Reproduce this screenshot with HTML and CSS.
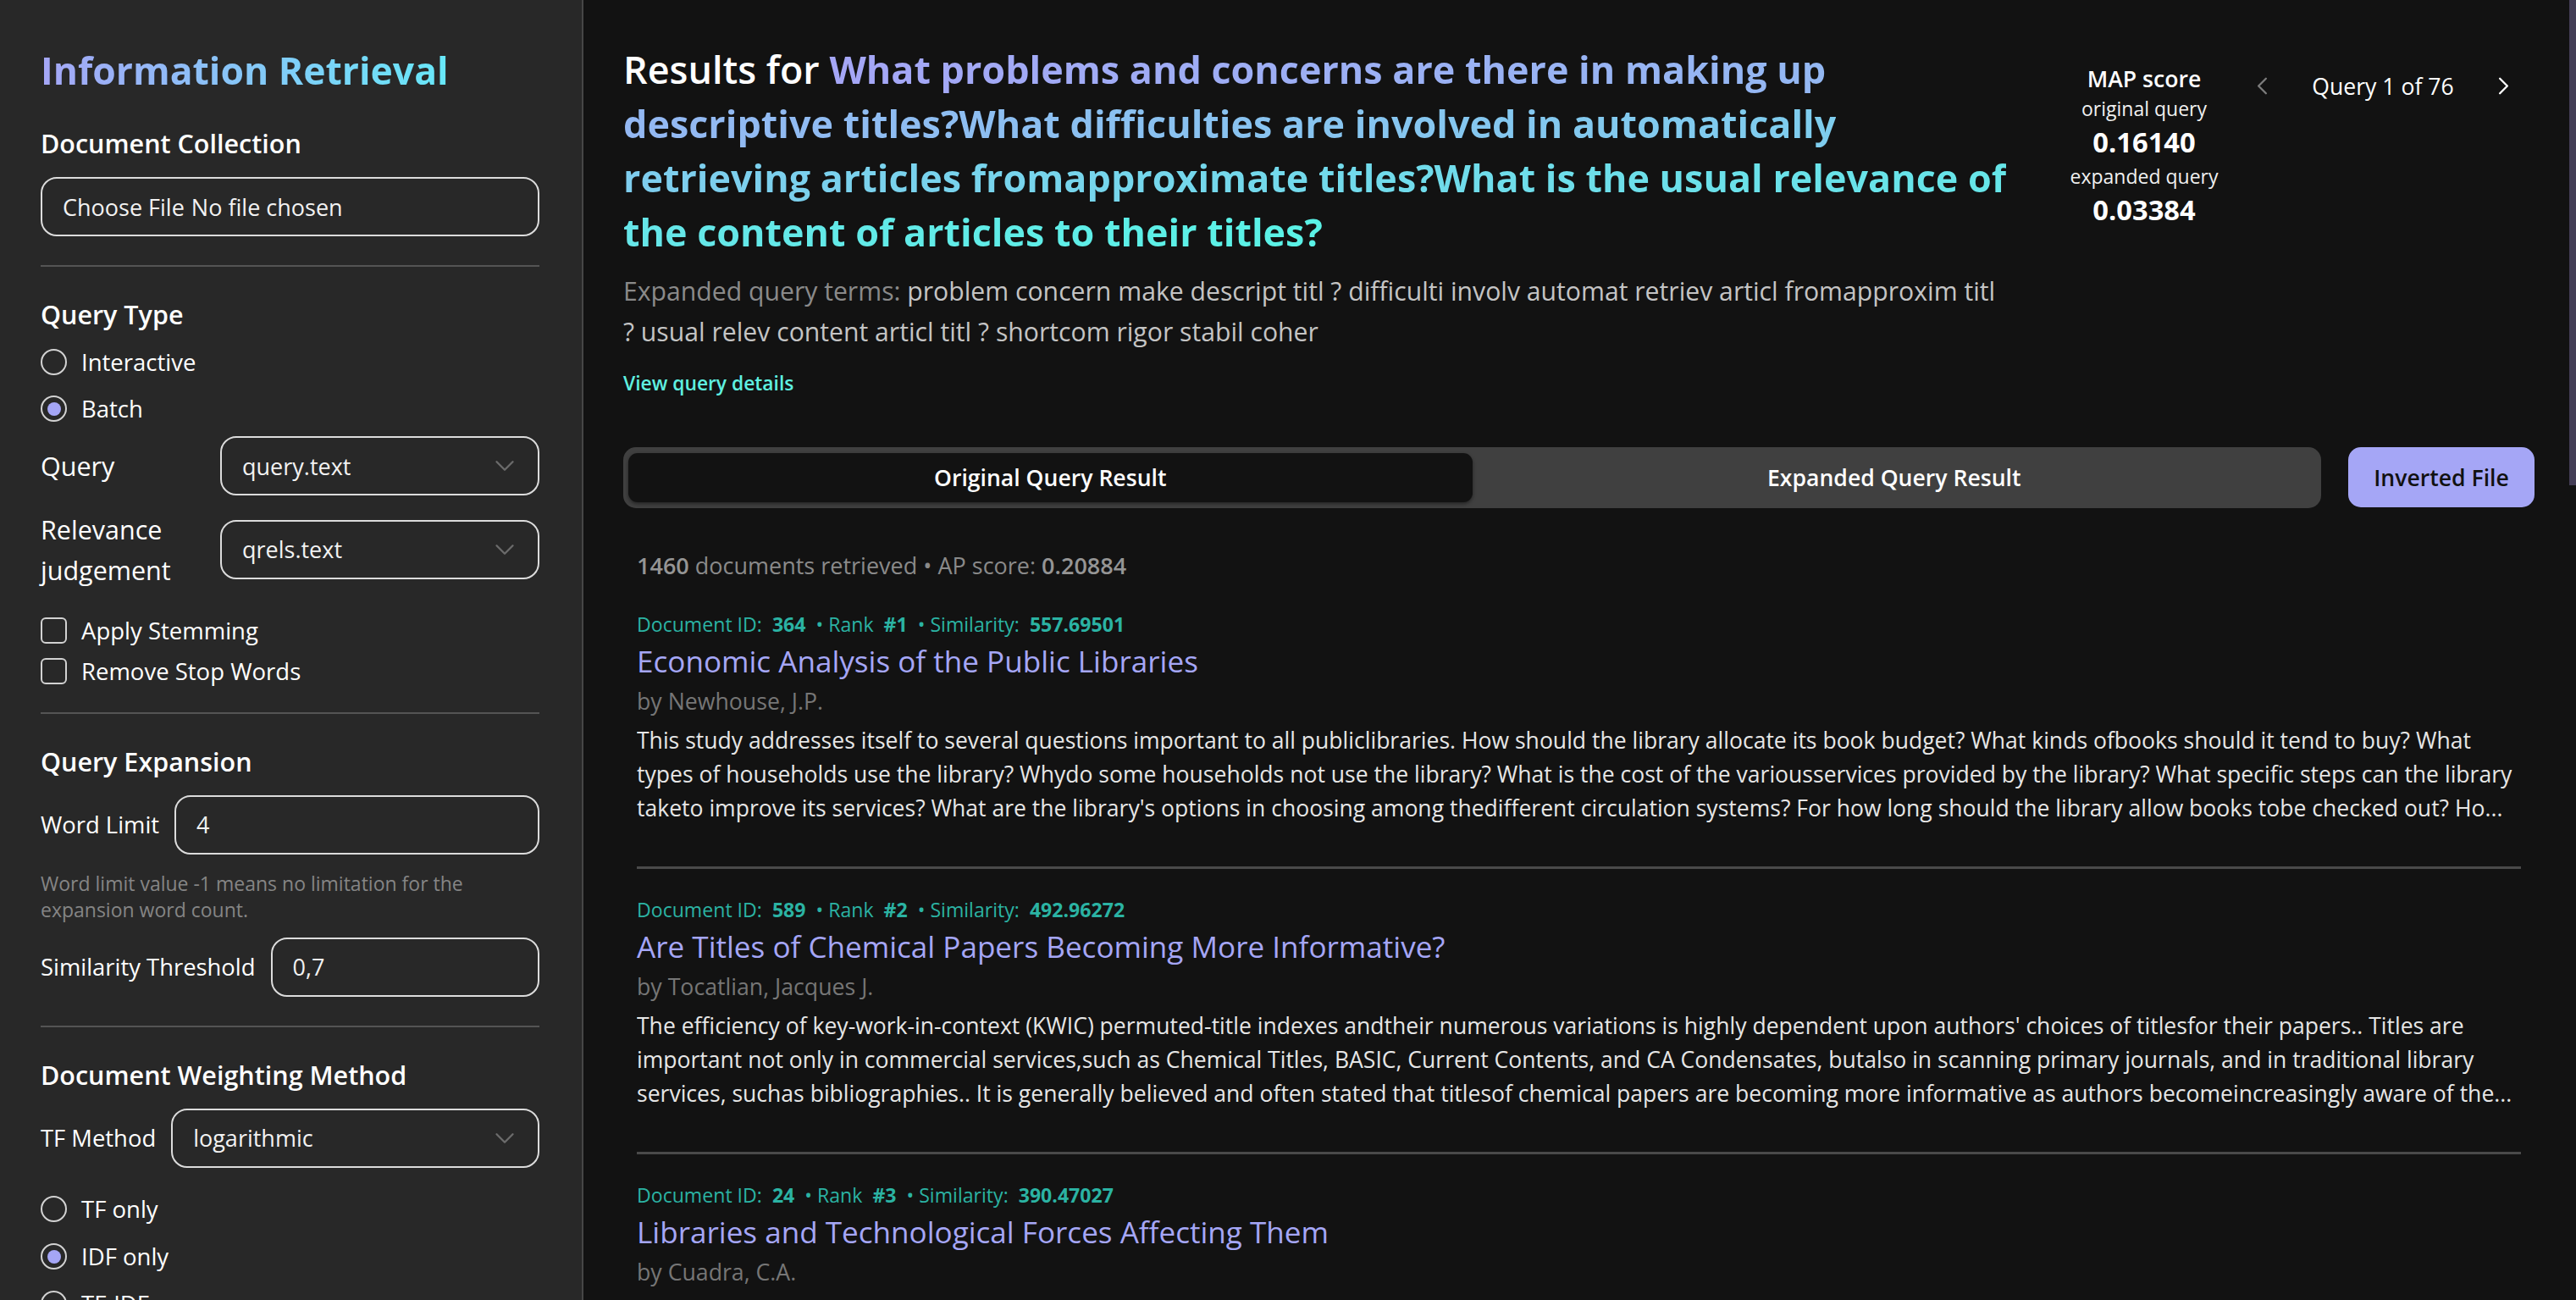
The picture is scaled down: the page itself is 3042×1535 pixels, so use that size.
FILE: index.html
```html
<!DOCTYPE html>
<html lang="en">
<head>
<meta charset="utf-8">
<title>Information Retrieval</title>
<link rel="stylesheet" href="styles.css">
</head>
<body>
<div class="app">
  <aside class="sidebar">
    <h1 class="brand">Information Retrieval</h1>

    <section class="panel panel-first">
      <h2 class="panel-title">Document Collection</h2>
      <div class="control file-control"><span class="file-button">Choose File</span><span>No file chosen</span></div>
    </section>

    <hr class="divider">

    <section class="panel">
      <h2 class="panel-title">Query Type</h2>
      <div class="choice-list">
        <div class="choice"><span class="radio"></span>Interactive</div>
        <div class="choice"><span class="radio radio-on"></span>Batch</div>
      </div>
      <div class="field field-fixed field-query">
        <span class="field-label">Query</span>
        <div class="control select"><span>query.text</span>
          <svg class="select-icon" viewBox="0 0 24 24" fill="none" stroke="currentColor" stroke-width="1.5" stroke-linecap="round" stroke-linejoin="round"><path d="m6 9 6 6 6-6"/></svg>
        </div>
      </div>
      <div class="field field-fixed field-qrels">
        <span class="field-label">Relevance judgement</span>
        <div class="control select"><span>qrels.text</span>
          <svg class="select-icon" viewBox="0 0 24 24" fill="none" stroke="currentColor" stroke-width="1.5" stroke-linecap="round" stroke-linejoin="round"><path d="m6 9 6 6 6-6"/></svg>
        </div>
      </div>
      <div class="check-list">
        <div class="choice"><span class="checkbox"></span>Apply Stemming</div>
        <div class="choice"><span class="checkbox"></span>Remove Stop Words</div>
      </div>
    </section>

    <hr class="divider divider-tight">

    <section class="panel">
      <h2 class="panel-title">Query Expansion</h2>
      <div class="field field-after-title">
        <span class="field-label">Word Limit</span>
        <div class="control input">4</div>
      </div>
      <p class="hint">Word limit value -1 means no limitation for the expansion word count.</p>
      <div class="field field-after-hint">
        <span class="field-label">Similarity Threshold</span>
        <div class="control input">0,7</div>
      </div>
    </section>

    <hr class="divider">

    <section class="panel">
      <h2 class="panel-title">Document Weighting Method</h2>
      <div class="field field-after-title">
        <span class="field-label">TF Method</span>
        <div class="control select"><span>logarithmic</span>
          <svg class="select-icon" viewBox="0 0 24 24" fill="none" stroke="currentColor" stroke-width="1.5" stroke-linecap="round" stroke-linejoin="round"><path d="m6 9 6 6 6-6"/></svg>
        </div>
      </div>
      <div class="choice-list choice-list-wide">
        <div class="choice"><span class="radio"></span>TF only</div>
        <div class="choice"><span class="radio radio-on"></span>IDF only</div>
        <div class="choice"><span class="radio"></span>TF-IDF</div>
      </div>
    </section>
  </aside>

  <main class="main">
    <div class="main-inner">
      <header class="results-header">
        <div class="query-block">
          <h2 class="query-heading">Results for <span class="query-text">What problems and concerns are there in making up descriptive titles?What difficulties are involved in automatically retrieving articles fromapproximate titles?What is the usual relevance of the content of articles to their titles?</span></h2>
          <p class="expanded"><span class="expanded-label">Expanded query terms:</span> problem concern make descript titl ? difficulti involv automat retriev articl fromapproxim titl ? usual relev content articl titl ? shortcom rigor stabil coher</p>
          <a class="details-link">View query details</a>
        </div>
        <div class="header-side">
          <div class="map">
            <div class="map-title">MAP score</div>
            <div class="map-label">original query</div>
            <div class="map-value">0.16140</div>
            <div class="map-label">expanded query</div>
            <div class="map-value">0.03384</div>
          </div>
          <nav class="pager">
            <button class="pager-btn pager-prev" type="button">
              <svg viewBox="0 0 24 24" fill="none" stroke="currentColor" stroke-width="1.6" stroke-linecap="round" stroke-linejoin="round"><path d="m15 18-6-6 6-6"/></svg>
            </button>
            <span class="pager-text">Query 1 of 76</span>
            <button class="pager-btn" type="button">
              <svg viewBox="0 0 24 24" fill="none" stroke="currentColor" stroke-width="1.6" stroke-linecap="round" stroke-linejoin="round"><path d="m9 18 6-6-6-6"/></svg>
            </button>
          </nav>
        </div>
      </header>

      <div class="toolbar">
        <div class="tabs">
          <button class="tab tab-active" type="button">Original Query Result</button>
          <button class="tab" type="button">Expanded Query Result</button>
        </div>
        <button class="inverted-btn" type="button">Inverted File</button>
      </div>

      <p class="stats"><strong>1460</strong> documents retrieved • AP score: <strong>0.20884</strong></p>

      <ol class="doc-list">
        <li class="doc">
          <div class="doc-meta"><span>Document ID:</span><b>364</b><span>• Rank</span><b>#1</b><span>• Similarity:</span><b>557.69501</b></div>
          <h3 class="doc-title">Economic Analysis of the Public Libraries</h3>
          <p class="doc-author">by Newhouse, J.P.</p>
          <p class="doc-abstract">This study addresses itself to several questions important to all publiclibraries. How should the library allocate its book budget? What kinds ofbooks should it tend to buy? What types of households use the library? Whydo some households not use the library? What is the cost of the variousservices provided by the library? What specific steps can the library taketo improve its services? What are the library's options in choosing among thedifferent circulation systems? For how long should the library allow books tobe checked out? Ho...</p>
        </li>
        <li class="doc">
          <div class="doc-meta"><span>Document ID:</span><b>589</b><span>• Rank</span><b>#2</b><span>• Similarity:</span><b>492.96272</b></div>
          <h3 class="doc-title">Are Titles of Chemical Papers Becoming More Informative?</h3>
          <p class="doc-author">by Tocatlian, Jacques J.</p>
          <p class="doc-abstract">The efficiency of key-work-in-context (KWIC) permuted-title indexes andtheir numerous variations is highly dependent upon authors' choices of titlesfor their papers.. Titles are important not only in commercial services,such as Chemical Titles, BASIC, Current Contents, and CA Condensates, butalso in scanning primary journals, and in traditional library services, suchas bibliographies.. It is generally believed and often stated that titlesof chemical papers are becoming more informative as authors becomeincreasingly aware of the...</p>
        </li>
        <li class="doc">
          <div class="doc-meta"><span>Document ID:</span><b>24</b><span>• Rank</span><b>#3</b><span>• Similarity:</span><b>390.47027</b></div>
          <h3 class="doc-title">Libraries and Technological Forces Affecting Them</h3>
          <p class="doc-author">by Cuadra, C.A.</p>
          <p class="doc-abstract">Technological forces affecting libraries are examined, with attention to the use of computers in library operations and in the handling of information...</p>
        </li>
      </ol>
    </div>
  </main>

  <div class="scroll-thumb" aria-hidden="true"></div>
</div>
</body>
</html>
```

FILE: styles.css
```css
* { box-sizing: border-box; }

html, body {
  margin: 0;
  height: 100%;
}

body {
  font-family: "Open Sans", "Noto Sans", sans-serif;
  background: #121212;
  color: #ffffff;
  overflow: hidden;
}

.app {
  position: relative;
  display: flex;
  height: 100vh;
}

/* ---------- Sidebar ---------- */
.sidebar {
  flex: 0 0 689px;
  height: 100vh;
  overflow: hidden;
  background: #282828;
  border-right: 2px solid #464646;
  padding: 53px 50px 0 48px;
}

.brand {
  margin: 0;
  width: fit-content;
  font-size: 44.5px;
  line-height: 60px;
  font-weight: 700;
  background: linear-gradient(90deg, #a5a6f6 0%, #67e8f9 100%);
  -webkit-background-clip: text;
  background-clip: text;
  color: transparent;
}

.panel-first { margin-top: 35px; }

.panel-title {
  margin: 0;
  font-size: 30.5px;
  line-height: 42px;
  font-weight: 600;
  color: #ffffff;
}

.control {
  height: 70px;
  display: flex;
  align-items: center;
  border: 2px solid #dcdcdc;
  border-radius: 19px;
  padding: 0 20px 0 24px;
  font-size: 27px;
  color: #f2f2f2;
}

.file-control {
  margin-top: 19px;
  gap: 8px;
}

.select { justify-content: space-between; }

.select-icon {
  width: 38px;
  height: 38px;
  color: #6b6b6b;
  flex-shrink: 0;
}

.divider {
  border: 0;
  height: 2px;
  background: #545454;
  margin: 34px 0 35px;
}

.divider-tight { margin-top: 27px; }

.choice-list {
  margin-top: 14px;
  display: flex;
  flex-direction: column;
  gap: 13.5px;
}

.choice-list-wide {
  margin-top: 28px;
  gap: 14px;
}

.check-list {
  margin-top: 27px;
  display: flex;
  flex-direction: column;
  gap: 6px;
}

.choice {
  height: 42px;
  display: flex;
  align-items: center;
  gap: 17px;
  font-size: 27.5px;
  font-weight: 500;
  color: #ffffff;
}

.radio {
  width: 31px;
  height: 31px;
  border-radius: 50%;
  border: 2px solid #d2d2d2;
  flex-shrink: 0;
  display: flex;
  align-items: center;
  justify-content: center;
}

.radio-on::after {
  content: "";
  width: 16px;
  height: 16px;
  border-radius: 50%;
  background: #a5a6f6;
}

.checkbox {
  width: 31px;
  height: 31px;
  border-radius: 6px;
  border: 2px solid #d2d2d2;
  flex-shrink: 0;
}

.field {
  display: flex;
  align-items: center;
  gap: 18px;
}

.field .control { flex: 1; min-width: 0; }

.field-label {
  flex-shrink: 0;
  font-size: 27.4px;
  line-height: 44px;
  font-weight: 500;
  color: #ffffff;
}

.field-fixed .field-label {
  width: 194px;
  font-size: 30.5px;
  line-height: 48px;
}

.field-query { margin-top: 11.5px; }
.field-qrels { margin-top: 15.5px; }
.field-after-title { margin-top: 19px; }
.field-after-hint { margin-top: 17px; }

.hint {
  margin: 19px 0 0;
  font-size: 23px;
  line-height: 31px;
  color: #858585;
}

/* ---------- Main ---------- */
.main {
  flex: 1;
  min-width: 0;
  height: 100vh;
  overflow-y: auto;
  background: #121212;
}

.main-inner {
  padding: 50px 49px 60px 47px;
}

.results-header {
  display: flex;
  align-items: flex-start;
  gap: 52px;
}

.query-block { flex: 1; min-width: 0; }

.query-heading {
  margin: 0;
  font-size: 44.9px;
  line-height: 64px;
  font-weight: 600;
  color: #ffffff;
}

.query-text {
  font-weight: 700;
  background: linear-gradient(90deg, #a5a6f6 0%, #5af2e6 100%);
  -webkit-background-clip: text;
  background-clip: text;
  color: transparent;
}

.expanded {
  margin: 13.5px 0 0;
  max-width: 1629px;
  font-size: 30.18px;
  line-height: 48px;
  color: #c4c4c4;
}

.expanded-label { color: #8a8a8a; }

.details-link {
  display: block;
  margin-top: 21.8px;
  font-size: 22.8px;
  line-height: 32px;
  font-weight: 600;
  color: #5ff0e0;
}

.header-side {
  display: flex;
  align-items: flex-start;
  gap: 18px;
  padding-top: 25px;
  margin-right: 10px;
  flex-shrink: 0;
}

.map {
  width: 190px;
  text-align: center;
}

.map-title {
  font-size: 26.6px;
  line-height: 36px;
  font-weight: 600;
}

.map-label {
  font-size: 23px;
  line-height: 34px;
  color: #f0f0f0;
}

.map-value {
  font-size: 32.7px;
  line-height: 46px;
  font-weight: 700;
}

.pager {
  width: 338px;
  display: grid;
  grid-template-columns: 53px 1fr 53px;
  align-items: center;
}

.pager-btn {
  width: 53px;
  height: 53px;
  padding: 9px;
  border: 0;
  background: transparent;
  color: #ffffff;
  display: flex;
}

.pager-btn svg { width: 35px; height: 35px; }

.pager-prev { color: #7c7c7c; }

.pager-text {
  text-align: center;
  font-size: 26.6px;
  line-height: 36px;
}

.toolbar {
  margin-top: 58.8px;
  display: flex;
  gap: 32px;
}

.tabs {
  flex: 1;
  height: 72px;
  display: grid;
  grid-template-columns: 1fr 1fr;
  padding: 7px 6px;
  background: #404040;
  border-radius: 15px;
}

.tab {
  border: 0;
  background: transparent;
  border-radius: 11px;
  font-family: inherit;
  font-size: 26.6px;
  font-weight: 600;
  color: #ffffff;
}

.tab-active {
  background: #121212;
  box-shadow: 0 2px 4px rgba(0, 0, 0, 0.45);
}

.inverted-btn {
  height: 71px;
  width: 220px;
  border: 0;
  border-radius: 15px;
  background: #a5a6f6;
  font-family: inherit;
  font-size: 26.6px;
  font-weight: 600;
  color: #111111;
}

.stats {
  margin: 49.5px 0 0;
  padding: 0 16px;
  font-size: 27px;
  line-height: 36px;
  color: #8a8a8a;
}

.stats strong { font-weight: 600; color: #959595; }

.doc-list {
  list-style: none;
  margin: 35.5px 0 0;
  padding: 0 16px;
}

.doc {
  padding-bottom: 49px;
  border-bottom: 3px solid #4a4a4a;
}

.doc + .doc { margin-top: 31.5px; }

.doc-meta {
  display: flex;
  gap: 12px;
  font-size: 23.1px;
  line-height: 32px;
  color: #2bb3a3;
}

.doc-meta b { font-weight: 700; }

.doc-title {
  margin: 3px 0 0;
  font-size: 35.1px;
  line-height: 48px;
  font-weight: 500;
  color: #a5a6f6;
}

.doc-author {
  margin: 5.7px 0 0;
  font-size: 26.7px;
  line-height: 36px;
  color: #767676;
}

.doc-abstract {
  margin: 8.7px 0 0;
  font-size: 26.55px;
  line-height: 40px;
  color: #e6e6e6;
  display: -webkit-box;
  -webkit-box-orient: vertical;
  -webkit-line-clamp: 3;
  overflow: hidden;
}

/* scrollbar thumb of the results pane, drawn over its right edge */
.scroll-thumb {
  position: absolute;
  top: 0;
  right: 0;
  width: 8px;
  height: 573px;
  background: #433d55;
}
```
